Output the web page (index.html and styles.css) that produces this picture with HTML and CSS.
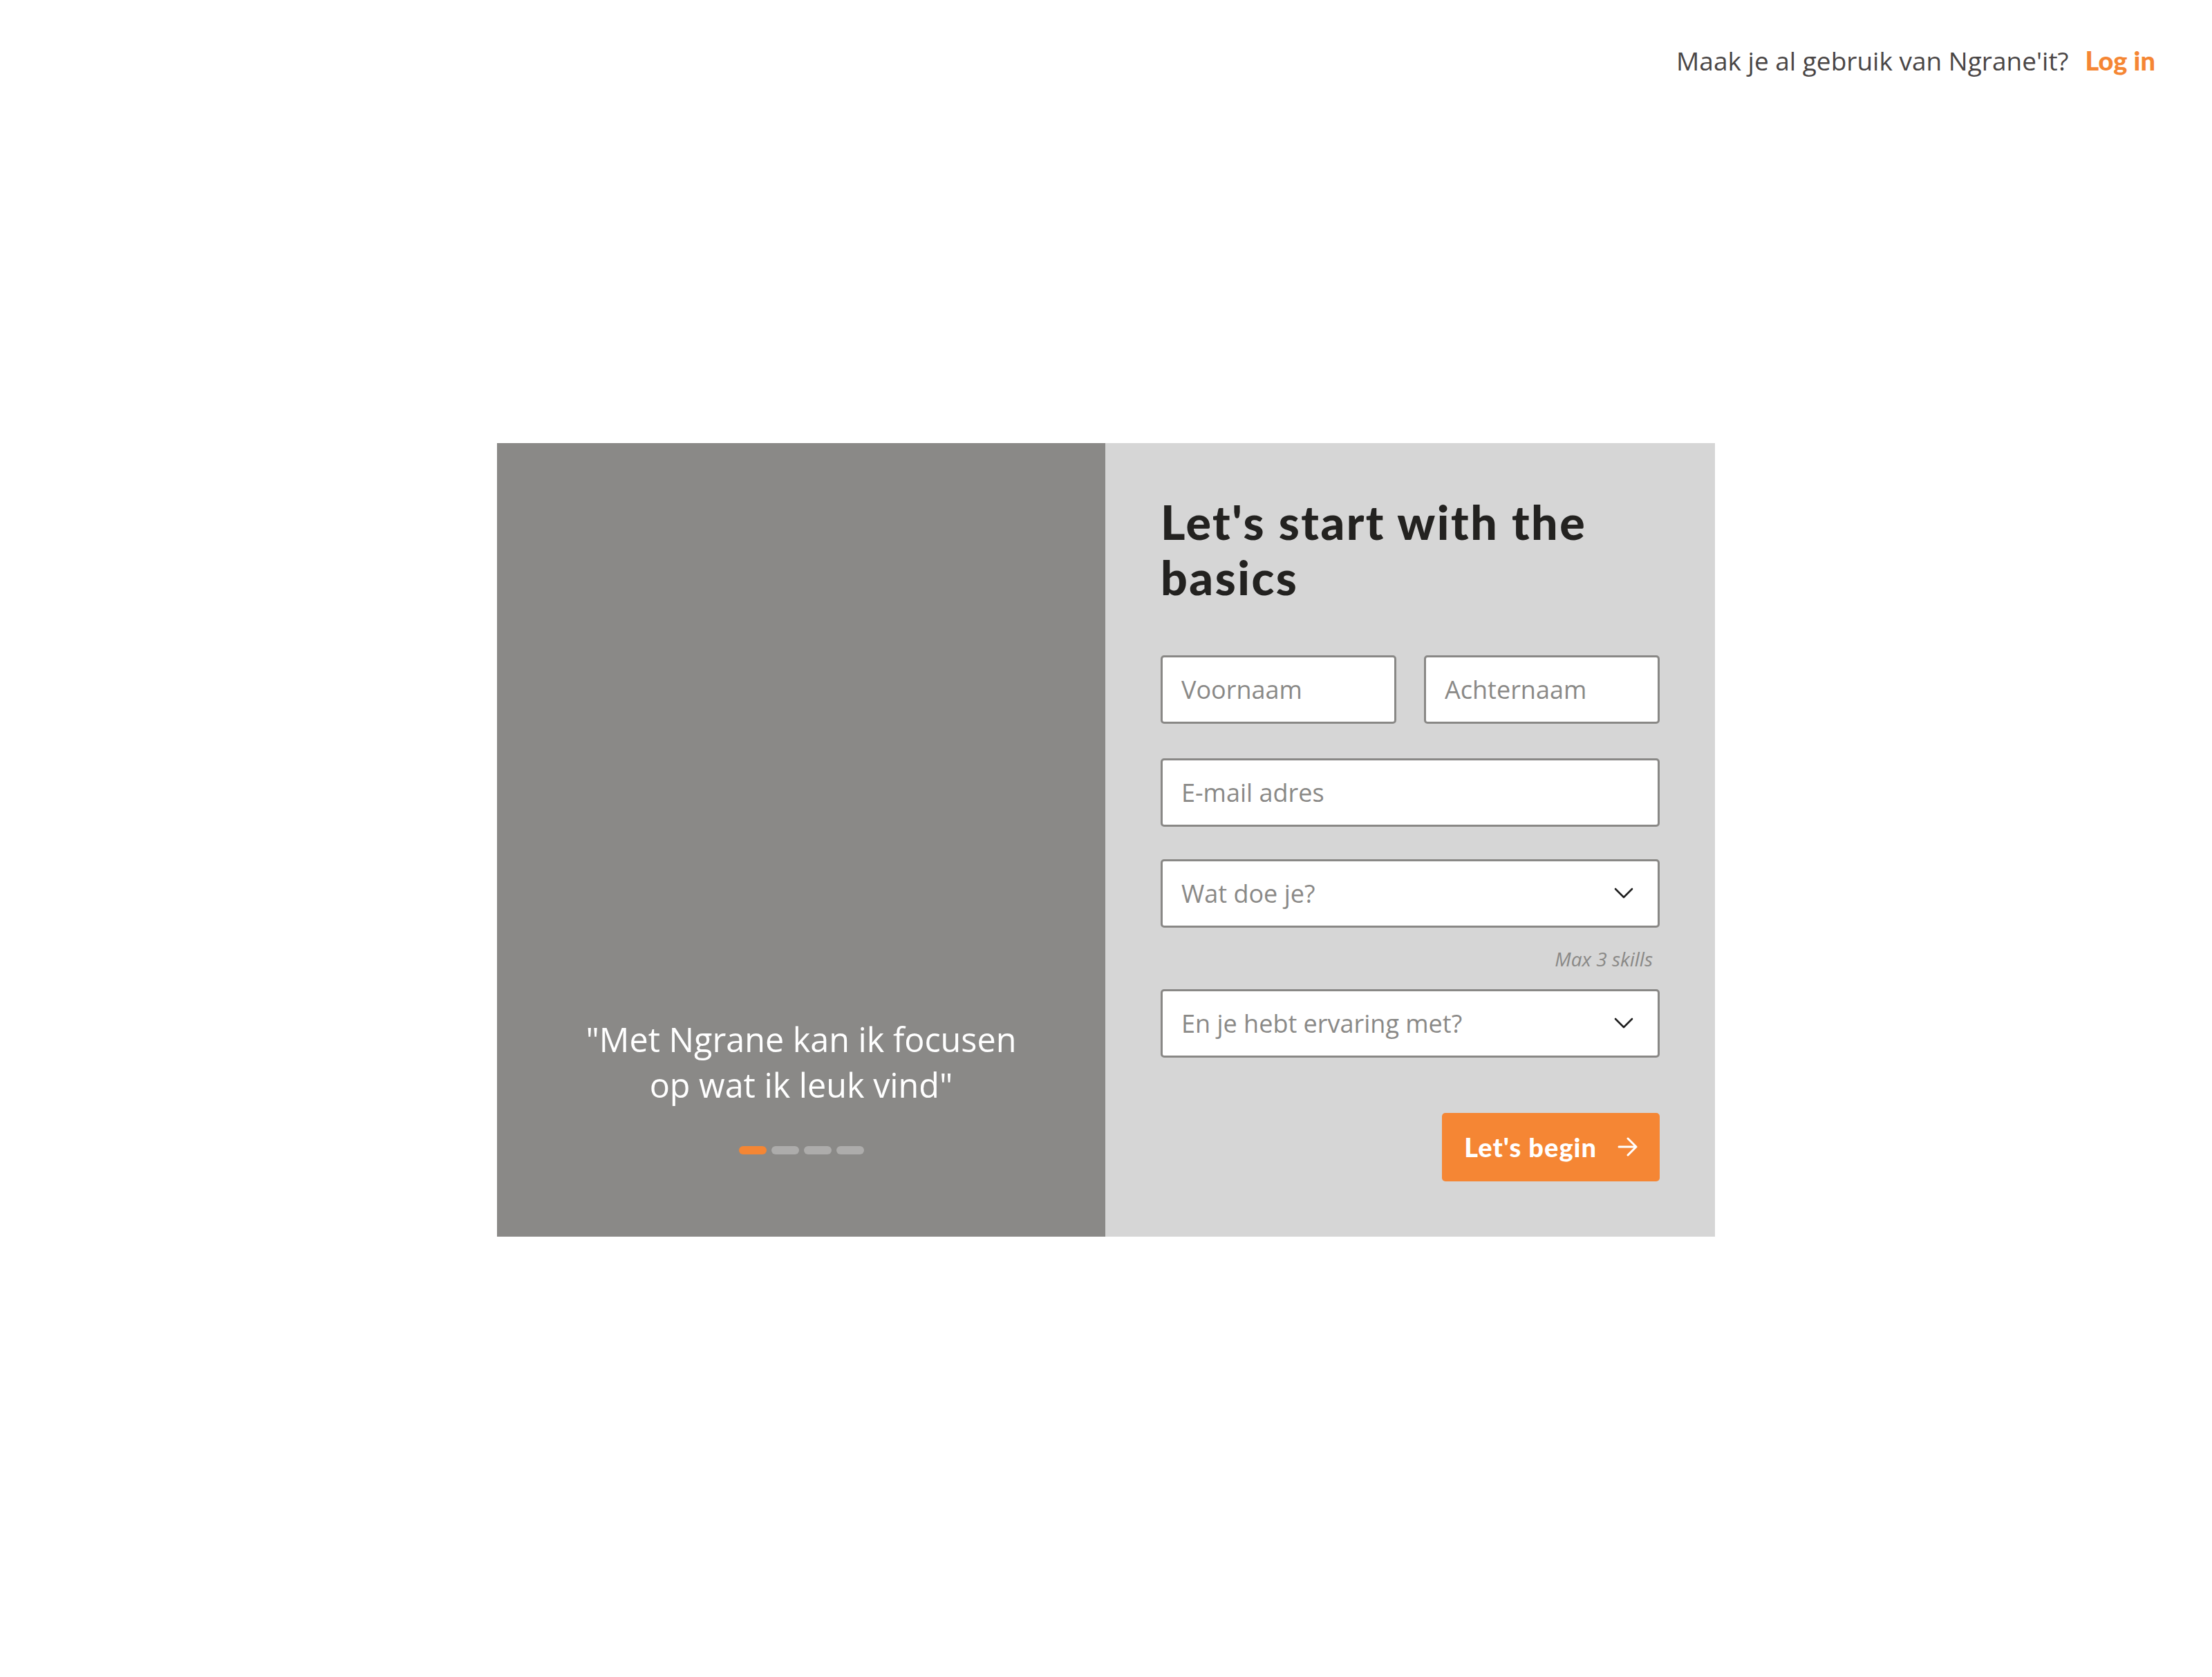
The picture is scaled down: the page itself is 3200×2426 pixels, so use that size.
FILE: index.html
```html
<!DOCTYPE html>
<html lang="nl">
<head>
<meta charset="utf-8">
<title>Ngrane – Aanmelden</title>
<link rel="stylesheet" href="styles.css">
</head>
<body>
<div class="page">
  <header class="topbar">
    <span class="topbar-text">Maak je al gebruik van Ngrane'it?</span>
    <a class="login" href="#">Log in</a>
  </header>
  <main class="stage">
    <section class="card">
      <div class="media">
        <p class="quote">"Met Ngrane kan ik focusen<br>op wat ik leuk vind"</p>
        <div class="dots">
          <span class="dot active"></span>
          <span class="dot"></span>
          <span class="dot"></span>
          <span class="dot"></span>
        </div>
      </div>
      <form class="form-panel">
        <h1 class="title">Let's start with the basics</h1>
        <div class="row">
          <input class="field" type="text" placeholder="Voornaam">
          <input class="field" type="text" placeholder="Achternaam">
        </div>
        <input class="field email" type="email" placeholder="E-mail adres">
        <div class="field select skills">
          <span>Wat doe je?</span>
          <svg class="chevron" width="28" height="16" viewBox="0 0 28 16"><polyline points="2,2 14,14 26,2" fill="none" stroke="#1f1f1f" stroke-width="2.6" stroke-linecap="round" stroke-linejoin="round"/></svg>
        </div>
        <div class="hint">Max 3 skills</div>
        <div class="field select">
          <span>En je hebt ervaring met?</span>
          <svg class="chevron" width="28" height="16" viewBox="0 0 28 16"><polyline points="2,2 14,14 26,2" fill="none" stroke="#1f1f1f" stroke-width="2.6" stroke-linecap="round" stroke-linejoin="round"/></svg>
        </div>
        <button class="btn" type="button">
          <span>Let's begin</span>
          <svg width="30" height="28" viewBox="0 0 30 28"><path d="M2 14 H27 M15 2 L27 14 L15 26" fill="none" stroke="#fff" stroke-width="3" stroke-linecap="round" stroke-linejoin="round"/></svg>
        </button>
      </form>
    </section>
  </main>
  <div class="spacer"></div>
</div>
</body>
</html>
```
FILE: styles.css
```css
html, body {
  margin: 0;
  padding: 0;
}

body {
  font-family: "Open Sans", "Noto Sans", sans-serif;
  background: #ffffff;
  color: #4a4646;
}

.page {
  min-height: 100vh;
  display: grid;
  grid-template-rows: 115px 1fr 112px;
}

.topbar {
  display: flex;
  justify-content: flex-end;
  align-items: baseline;
  gap: 24px;
  padding: 63px 82px 0 0;
  font-size: 37px;
  line-height: 49px;
}

.topbar-text {
  color: #4a4646;
}

.login {
  font-family: "Lato", "Open Sans", sans-serif;
  font-weight: 900;
  font-size: 38px;
  color: #f58634;
  text-decoration: none;
}

.stage {
  display: flex;
  justify-content: center;
  align-items: center;
}

.card {
  display: flex;
  width: 1762px;
}

.media {
  width: 880px;
  background: #8a8987;
  display: flex;
  flex-direction: column;
  justify-content: flex-end;
  align-items: center;
  padding-bottom: 119px;
  box-sizing: border-box;
}

.quote {
  margin: 0;
  font-size: 48.5px;
  line-height: 66px;
  color: #ffffff;
  text-align: center;
}

.dots {
  display: flex;
  gap: 7px;
  margin-top: 56px;
}

.dot {
  width: 40px;
  height: 12px;
  border-radius: 6px;
  background: #adacab;
}

.dot.active {
  background: #f58634;
}

.form-panel {
  width: 882px;
  box-sizing: border-box;
  background: #d6d6d6;
  padding: 74px 80px 80px;
  display: flex;
  flex-direction: column;
  margin: 0;
}

.title {
  margin: 0 0 73px;
  font-family: "Lato", "Open Sans", sans-serif;
  font-weight: 900;
  font-size: 68px;
  line-height: 80px;
  letter-spacing: 2.5px;
  color: #232220;
}

.row {
  display: flex;
  gap: 40px;
}

.field {
  display: block;
  width: 100%;
  min-width: 0;
  height: 99px;
  box-sizing: border-box;
  margin: 0;
  border: 3px solid #898886;
  border-radius: 5px;
  background: #ffffff;
  padding: 0 35px 0 27px;
  font-family: "Open Sans", "Noto Sans", sans-serif;
  font-size: 36px;
  color: #333333;
  outline: none;
}

.field::placeholder {
  color: #8a8987;
  opacity: 1;
}

.email {
  margin-top: 50px;
}

.select {
  display: flex;
  align-items: center;
  justify-content: space-between;
  color: #8a8987;
}

.skills {
  margin-top: 47px;
}

.hint {
  margin: 26px 10px 25px 0;
  text-align: right;
  font-style: italic;
  font-size: 28px;
  line-height: 38px;
  color: #8a8987;
}

.btn {
  align-self: flex-end;
  margin-top: 80px;
  height: 99px;
  padding: 0 31px 0 32px;
  display: flex;
  align-items: center;
  gap: 30px;
  background: #f58634;
  border: none;
  border-radius: 5px;
  color: #ffffff;
  font-family: "Lato", "Open Sans", sans-serif;
  font-weight: 900;
  font-size: 38px;
  letter-spacing: 1px;
  cursor: pointer;
}
```
